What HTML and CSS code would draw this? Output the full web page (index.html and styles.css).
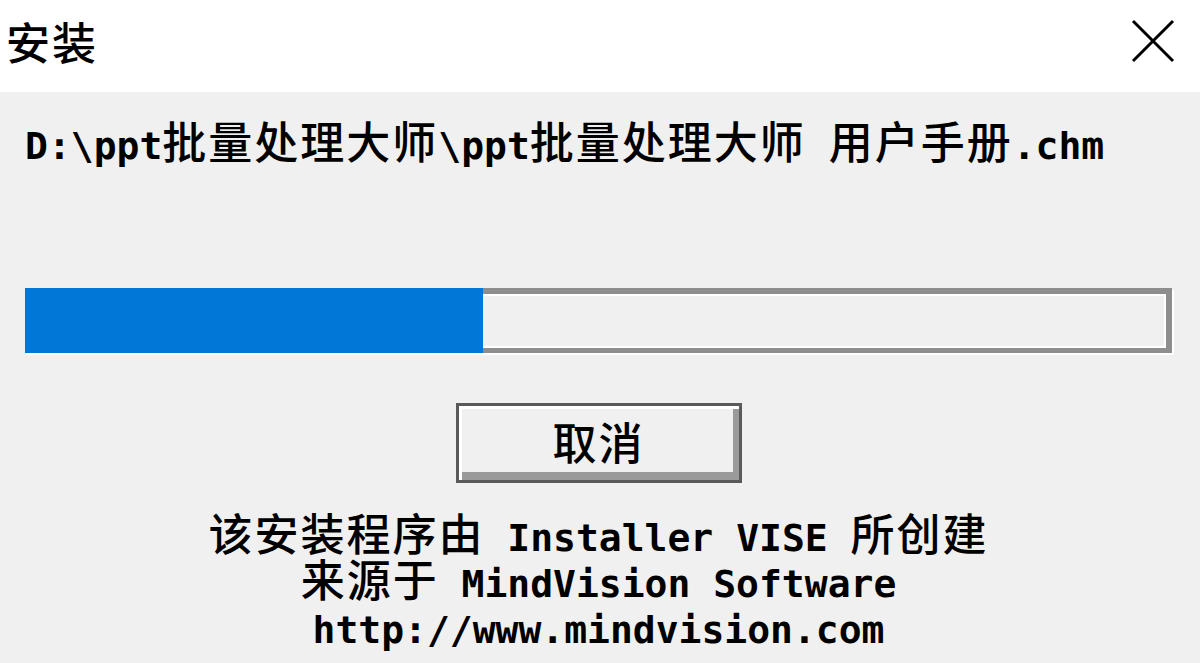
FILE: index.html
```html
<!DOCTYPE html>
<html lang="zh-CN">
<head>
    <meta charset="UTF-8">
    <title>安装</title>
    <link rel="stylesheet" href="styles.css">
</head>
<body>
    <div class="dialog">
        <header class="titlebar">
            <span class="cj title">安装</span>
            <svg class="close" width="44" height="44" viewBox="0 0 44 44">
                <path d="M2 2 L42 42 M42 2 L2 42"/>
            </svg>
        </header>

        <main class="content">
            <p class="path">D:\ppt<span class="cj">批量处理大师</span>\ppt<span class="cj">批量处理大师</span> <span class="cj">用户手册</span>.chm</p>

            <div class="progress">
                <div class="progress-fill" style="width: 458px"></div>
            </div>

            <button class="cancel"><span class="cj">取消</span></button>

            <div class="credits">
                <p><span class="cj">该安装程序由</span> Installer VISE <span class="cj">所创建</span></p>
                <p><span class="cj">来源于</span> MindVision Software</p>
                <p>http://www.mindvision.com</p>
            </div>
        </main>
    </div>
</body>
</html>
```

FILE: styles.css
```css
body {
    margin: 0;
    width: 1200px;
    height: 663px;
    overflow: hidden;
    background: #f0f0f0;
    color: #000;
    font-family: "DejaVu Sans Mono", "Liberation Mono", monospace;
    font-size: 38px;
    font-weight: bold;
}
.dialog {
    display: flex;
    flex-direction: column;
    height: 100%;
}
.cj {
    font-family: "Noto Sans CJK SC", "Noto Sans CJK JP", sans-serif;
    font-size: 44px;
    font-weight: 500;
    letter-spacing: 2px;
}
.titlebar {
    display: flex;
    flex-shrink: 0;
    justify-content: space-between;
    align-items: center;
    height: 92px;
    padding: 0 25px 0 6px;
    background: #fff;
}
.title {
    line-height: 48px;
    margin-top: -10px;
}
.close {
    margin-top: -10px;
}
.close path {
    fill: none;
    stroke: #000;
    stroke-width: 3;
}
.content {
    display: flex;
    flex-direction: column;
    align-items: center;
    padding: 0 28px 0 25px;
}
.path {
    align-self: stretch;
    margin: 24px 0 0;
    line-height: 48px;
    white-space: nowrap;
}
.progress {
    align-self: stretch;
    display: flex;
    flex-shrink: 0;
    height: 65px;
    margin-top: 118px;
    background: #f0f0f0;
    box-shadow:
        inset 0 6px #8e8e8e,
        inset -6px 0 #8e8e8e,
        inset 0 -5px #8e8e8e,
        inset 0 8px #fff,
        inset -8px 0 #fff,
        inset 0 -7px #fff,
        2px 2px #fff;
}
.progress-fill {
    height: 100%;
    background: #0078d7;
}
.cancel {
    flex-shrink: 0;
    width: 286px;
    height: 80px;
    margin-top: 50px;
    padding: 0;
    border: 3px solid #5a5a5a;
    background: #f0f0f0;
    box-shadow: inset 3px 3px #fff, inset -6px -8px #9a9a9a;
    color: #000;
    line-height: 1;
}
.cancel .cj {
    position: relative;
    top: -2px;
}
.credits {
    margin-top: 32px;
    text-align: center;
}
.credits p {
    margin: 0;
    height: 46px;
    line-height: 46px;
    white-space: nowrap;
}
.credits .cj {
    line-height: 0;
}
```
